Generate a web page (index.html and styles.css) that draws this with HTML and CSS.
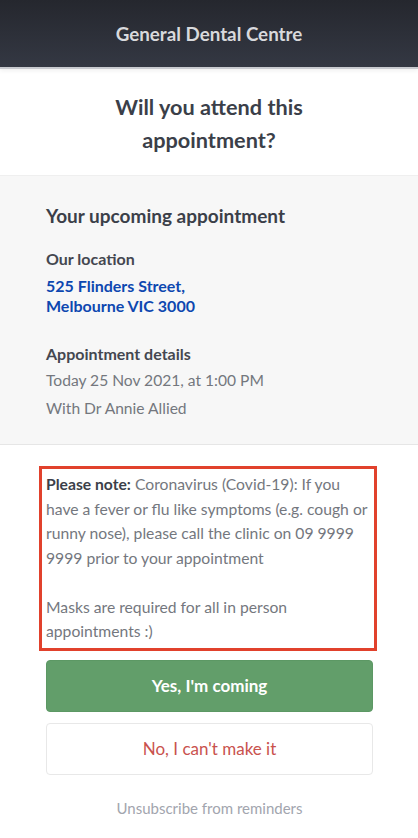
FILE: index.html
```html
<!DOCTYPE html>
<html lang="en">
<head>
  <meta charset="UTF-8">
  <title>General Dental Centre</title>
  <link rel="stylesheet" href="styles.css">
</head>
<body>

  <header class="topbar">General Dental Centre</header>

  <h1 class="question">Will you attend this<br>appointment?</h1>

  <section class="details">
    <h2>Your upcoming appointment</h2>
    <h3>Our location</h3>
    <a class="address" href="#">525 Flinders Street,<br>Melbourne VIC 3000</a>

    <h3 class="gap">Appointment details</h3>
    <p>Today 25 Nov 2021, at 1:00 PM</p>
    <p>With Dr Annie Allied</p>
  </section>

  <div class="actions">
    <div class="note">
      <p><b>Please note:</b> Coronavirus (Covid-19): If you have a fever or flu like symptoms (e.g. cough or runny nose), please call the clinic on 09 9999 9999 prior to your appointment</p>
      <p>Masks are required for all in person appointments :)</p>
    </div>

    <button class="btn yes">Yes, I'm coming</button>
    <button class="btn no">No, I can't make it</button>

    <a class="unsub" href="#">Unsubscribe from reminders</a>
  </div>

</body>
</html>
```

FILE: styles.css
```css
body {
  margin: 0;
  font-family: Lato, "Open Sans", sans-serif;
  background: white;
  color: #3b3f49;
}
.topbar {
  height: 67px;
  line-height: 67px;
  text-align: center;
  font-size: 18.8px;
  font-weight: bold;
  color: #d8d9dc;
  background: linear-gradient(#25272e, #343843);
  border-bottom: 2px solid #c9cbd0;
  box-shadow: 0 2px 4px rgba(0,0,0,0.06);
}
.question {
  margin: 0;
  padding: 22px 0 18px;
  text-align: center;
  font-size: 21.7px;
  line-height: 33px;
  font-weight: bold;
  color: #3b3f49;
}
.details {
  background: #f7f7f7;
  border-top: 1px solid #efefef;
  border-bottom: 1px solid #e6e6e6;
  padding: 28px 46px 22px;
}
.details h2 {
  margin: 0 0 21px;
  font-size: 19px;
  line-height: 24px;
  font-weight: bold;
  color: #3b3f49;
}
.details h3 {
  margin: 0 0 7px;
  font-size: 16px;
  line-height: 20px;
  font-weight: bold;
  color: #444750;
}
.details h3.gap {
  margin-top: 28px;
  margin-bottom: 2px;
}
.address {
  display: block;
  font-size: 16px;
  line-height: 20px;
  font-weight: bold;
  color: #0d47b0;
  text-decoration: none;
}
.details p {
  margin: 0;
  font-size: 15.6px;
  line-height: 28px;
  color: #74777e;
}
.actions {
  padding: 21px 45px 20px 46px;
}
.note {
  margin: 0 -4px 9px -7px;
  border: 3px solid #e1412c;
  padding: 3px 0 4px 4px;
}
.note p {
  margin: 0 0 24.5px;
  font-size: 15.7px;
  line-height: 24.5px;
  color: #74777e;
}
.note p:last-child {
  margin-bottom: 0;
}
.note b {
  color: #3b3f49;
}
.btn {
  display: block;
  width: 100%;
  height: 52px;
  margin-bottom: 11px;
  border-radius: 4px;
  font-family: Lato, sans-serif;
  font-size: 17px;
  cursor: pointer;
}
.yes {
  background: #629e6a;
  border: 1px solid #5c9864;
  color: white;
  font-weight: bold;
}
.no {
  background: white;
  border: 1px solid #e8e8e8;
  color: #c9524e;
}
.unsub {
  display: block;
  margin-top: 24px;
  text-align: center;
  font-size: 15px;
  color: #a2a5ae;
  text-decoration: none;
}
```
